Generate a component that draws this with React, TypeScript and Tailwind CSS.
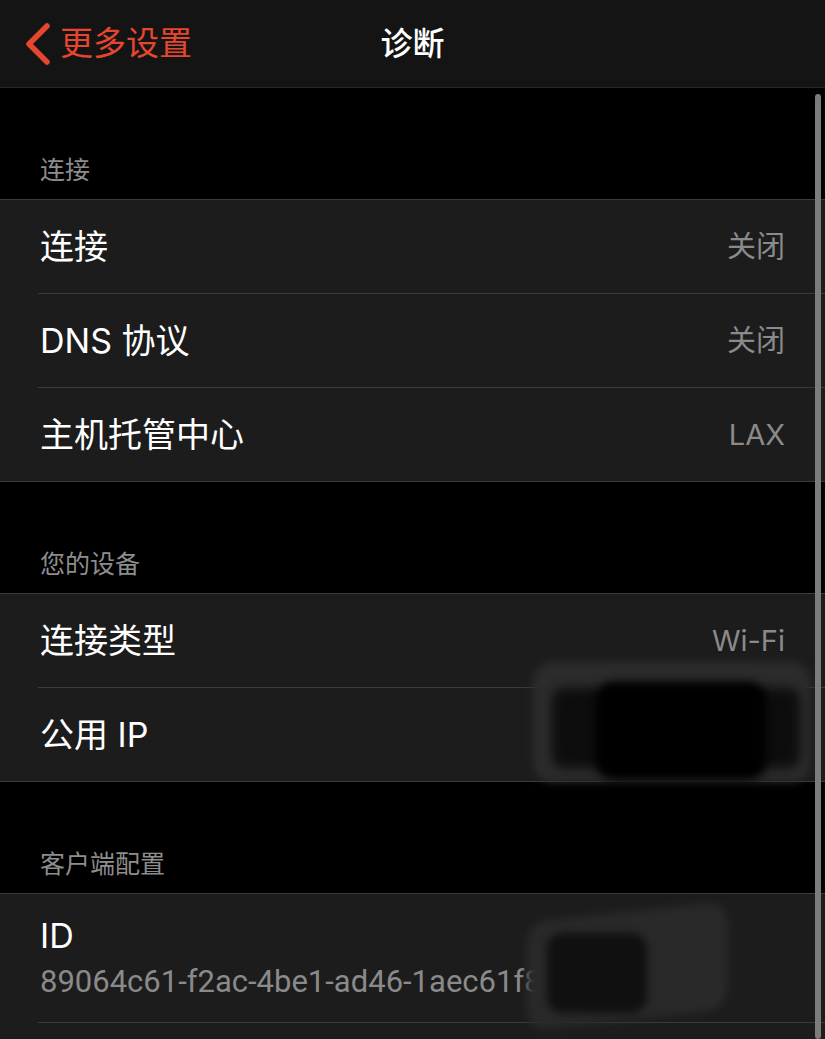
import React from "react";

const font = {
  fontFamily: '"Inter", "Noto Sans CJK SC", sans-serif',
};

type Row = { label: string; value?: string };

const sections: { title: string; rows: Row[] }[] = [
  {
    title: "连接",
    rows: [
      { label: "连接", value: "关闭" },
      { label: "DNS 协议", value: "关闭" },
      { label: "主机托管中心", value: "LAX" },
    ],
  },
  {
    title: "您的设备",
    rows: [
      { label: "连接类型", value: "Wi-Fi" },
      { label: "公用 IP" },
    ],
  },
];

function SectionTitle({ children }: { children: React.ReactNode }) {
  return (
    <div className="h-[111px] flex items-end pb-[14px] pl-[40px]">
      <span className="text-[25px] leading-[30px] text-[#8d8d8d]">{children}</span>
    </div>
  );
}

export default function App() {
  return (
    <div className="relative w-full h-[1039px] bg-black overflow-hidden" style={font}>
      <div className="h-[88px] bg-[#141414] border-b border-[#262626] flex items-center relative">
        <div className="flex items-center pl-[22px] gap-[8px] text-[#e4462f]">
          <svg width="30" height="42" viewBox="0 0 30 42" fill="none">
            <path d="M25 3 L7 21 L25 39" stroke="#e4462f" strokeWidth="5.5" strokeLinecap="round" strokeLinejoin="round" />
          </svg>
          <span className="text-[33px] leading-none">更多设置</span>
        </div>
        <div className="absolute left-0 right-0 top-0 h-full flex items-center justify-center pointer-events-none">
          <span className="text-[32px] font-medium text-white leading-none">诊断</span>
        </div>
      </div>

      {sections.map((s) => (
        <div key={s.title}>
          <SectionTitle>{s.title}</SectionTitle>
          <div className="bg-[#1c1c1c] border-t border-b border-[#3b3b3b]">
            {s.rows.map((r, i) => (
              <div key={r.label} className={i > 0 ? "ml-[38px] border-t border-[#3b3b3b]" : "ml-[38px]"}>
                <div className="h-[93px] flex items-center justify-between pl-[2px] pr-[40px]">
                  <span className="text-[34px] text-white leading-none">{r.label}</span>
                  {r.value && <span className="text-[29px] text-[#8a8a8a] leading-none">{r.value}</span>}
                </div>
              </div>
            ))}
          </div>
        </div>
      ))}

      <SectionTitle>客户端配置</SectionTitle>
      <div className="bg-[#1c1c1c] border-t border-[#3b3b3b] h-[200px]">
        <div className="ml-[38px] border-b border-[#3b3b3b] h-[129px] pl-[2px] pt-[22px]">
          <div className="text-[34px] text-white leading-[40px]">ID</div>
          <div className="text-[31px] text-[#8a8a8a] leading-[36px] mt-[8px]" style={{ fontFamily: '"Roboto", sans-serif' }}>
            89064c61-f2ac-4be1-ad46-1aec61f8
          </div>
        </div>
      </div>

      {/* redaction smudges */}
      <div className="absolute left-[533px] top-[662px] w-[278px] h-[120px] rounded-[20px] bg-[#2c2c2c] blur-[4px]" />
      <div className="absolute left-[552px] top-[688px] w-[248px] h-[80px] rounded-[12px] bg-[#0d0d0d] blur-[6px]" />
      <div className="absolute left-[596px] top-[682px] w-[170px] h-[98px] rounded-[18px] bg-black blur-[5px]" />

      <div className="absolute left-[527px] top-[912px] w-[200px] h-[108px] rounded-[20px] bg-[#292929] blur-[4px] -skew-y-[6deg]" />
      <div className="absolute left-[547px] top-[933px] w-[100px] h-[80px] rounded-[16px] bg-[#101010] blur-[4px]" />

      {/* scroll indicator */}
      <div className="absolute right-[4px] top-[94px] bottom-0 w-[6px] rounded-full bg-[#7c7c7c]" />
    </div>
  );
}
